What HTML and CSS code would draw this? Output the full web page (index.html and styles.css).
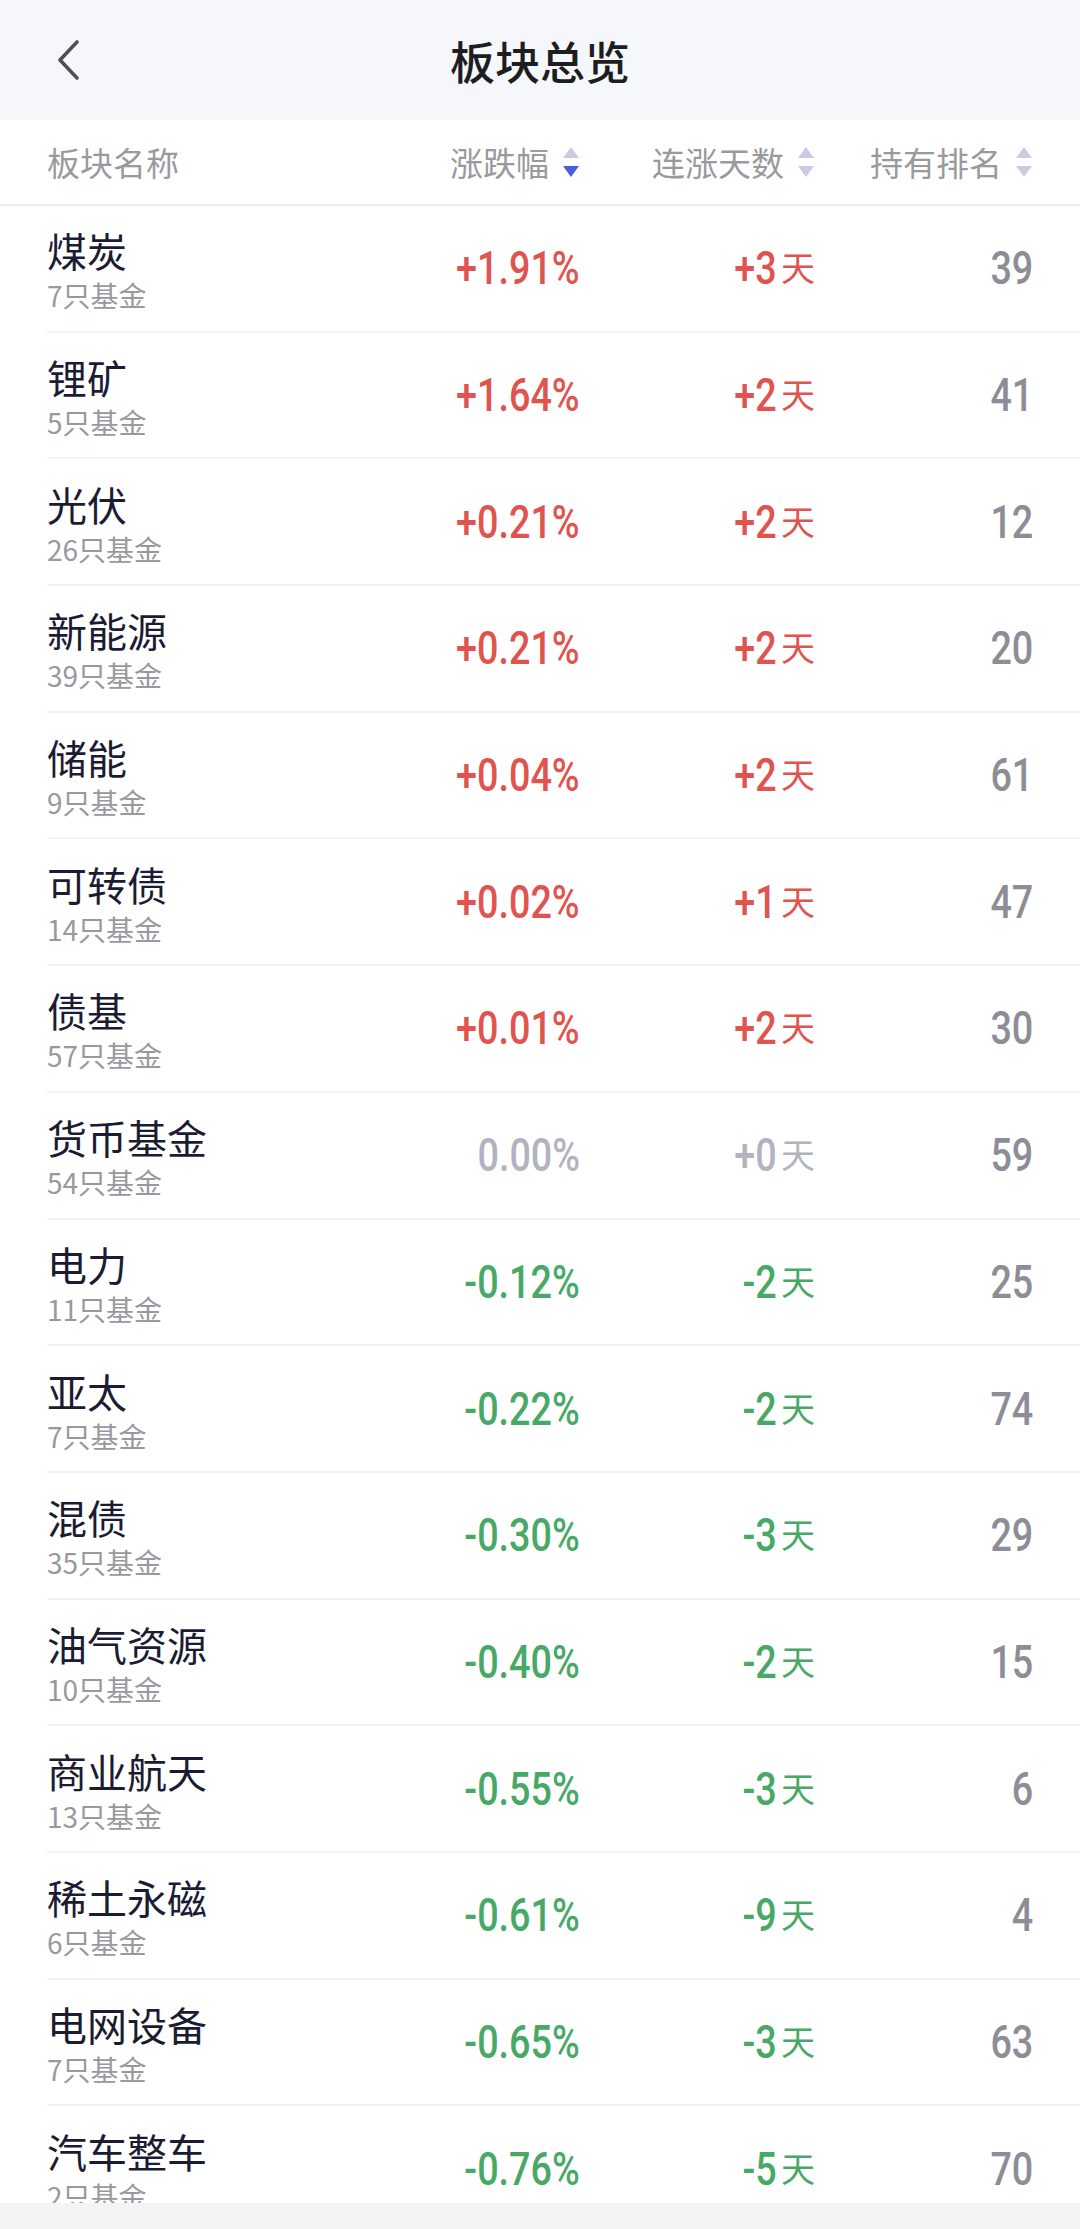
FILE: index.html
```html
<!DOCTYPE html>
<html>
    <head>
        <meta charset="utf-8">
        <title>板块总览</title>
        <link rel="stylesheet" href="styles.css">
    </head>
    <body>
        <header class="nav">
            <div class="nav-left">
                <svg class="back" width="26" height="42" viewBox="0 0 26 42">
                    <polyline points="21,3 4,21 21,39" fill="none" stroke="#4d4e58" stroke-width="3.6" stroke-linecap="round" stroke-linejoin="round"/>
                </svg>
            </div>
            <h1 class="title">板块总览</h1>
            <div></div>
        </header>

        <div class="thead">
            <div class="th th-name">板块名称</div>
            <div class="th">涨跌幅
                <svg class="sort" width="18" height="30" viewBox="0 0 18 30">
                    <polygon points="9,0 17,11 1,11" fill="#c9cbe3"/>
                    <polygon points="1,19 17,19 9,30" fill="#4660d9"/>
                </svg>
            </div>
            <div class="th">连涨天数
                <svg class="sort" width="18" height="30" viewBox="0 0 18 30">
                    <polygon points="9,0 17,11 1,11" fill="#c9cbe3"/>
                    <polygon points="1,19 17,19 9,30" fill="#c9cbe3"/>
                </svg>
            </div>
            <div class="th">持有排名
                <svg class="sort" width="18" height="30" viewBox="0 0 18 30">
                    <polygon points="9,0 17,11 1,11" fill="#c9cbe3"/>
                    <polygon points="1,19 17,19 9,30" fill="#c9cbe3"/>
                </svg>
            </div>
        </div>

        <main class="list">
            <div class="row up">
                <div class="name-cell"><div class="name">煤炭</div><div class="sub">7只基金</div></div>
                <div class="cell"><span class="num">+1.91%</span></div>
                <div class="cell"><span class="num">+3</span><span class="day">天</span></div>
                <div class="cell rank"><span class="num">39</span></div>
            </div>
            <div class="row up">
                <div class="name-cell"><div class="name">锂矿</div><div class="sub">5只基金</div></div>
                <div class="cell"><span class="num">+1.64%</span></div>
                <div class="cell"><span class="num">+2</span><span class="day">天</span></div>
                <div class="cell rank"><span class="num">41</span></div>
            </div>
            <div class="row up">
                <div class="name-cell"><div class="name">光伏</div><div class="sub">26只基金</div></div>
                <div class="cell"><span class="num">+0.21%</span></div>
                <div class="cell"><span class="num">+2</span><span class="day">天</span></div>
                <div class="cell rank"><span class="num">12</span></div>
            </div>
            <div class="row up">
                <div class="name-cell"><div class="name">新能源</div><div class="sub">39只基金</div></div>
                <div class="cell"><span class="num">+0.21%</span></div>
                <div class="cell"><span class="num">+2</span><span class="day">天</span></div>
                <div class="cell rank"><span class="num">20</span></div>
            </div>
            <div class="row up">
                <div class="name-cell"><div class="name">储能</div><div class="sub">9只基金</div></div>
                <div class="cell"><span class="num">+0.04%</span></div>
                <div class="cell"><span class="num">+2</span><span class="day">天</span></div>
                <div class="cell rank"><span class="num">61</span></div>
            </div>
            <div class="row up">
                <div class="name-cell"><div class="name">可转债</div><div class="sub">14只基金</div></div>
                <div class="cell"><span class="num">+0.02%</span></div>
                <div class="cell"><span class="num">+1</span><span class="day">天</span></div>
                <div class="cell rank"><span class="num">47</span></div>
            </div>
            <div class="row up">
                <div class="name-cell"><div class="name">债基</div><div class="sub">57只基金</div></div>
                <div class="cell"><span class="num">+0.01%</span></div>
                <div class="cell"><span class="num">+2</span><span class="day">天</span></div>
                <div class="cell rank"><span class="num">30</span></div>
            </div>
            <div class="row flat">
                <div class="name-cell"><div class="name">货币基金</div><div class="sub">54只基金</div></div>
                <div class="cell"><span class="num">0.00%</span></div>
                <div class="cell"><span class="num">+0</span><span class="day">天</span></div>
                <div class="cell rank"><span class="num">59</span></div>
            </div>
            <div class="row down">
                <div class="name-cell"><div class="name">电力</div><div class="sub">11只基金</div></div>
                <div class="cell"><span class="num">-0.12%</span></div>
                <div class="cell"><span class="num">-2</span><span class="day">天</span></div>
                <div class="cell rank"><span class="num">25</span></div>
            </div>
            <div class="row down">
                <div class="name-cell"><div class="name">亚太</div><div class="sub">7只基金</div></div>
                <div class="cell"><span class="num">-0.22%</span></div>
                <div class="cell"><span class="num">-2</span><span class="day">天</span></div>
                <div class="cell rank"><span class="num">74</span></div>
            </div>
            <div class="row down">
                <div class="name-cell"><div class="name">混债</div><div class="sub">35只基金</div></div>
                <div class="cell"><span class="num">-0.30%</span></div>
                <div class="cell"><span class="num">-3</span><span class="day">天</span></div>
                <div class="cell rank"><span class="num">29</span></div>
            </div>
            <div class="row down">
                <div class="name-cell"><div class="name">油气资源</div><div class="sub">10只基金</div></div>
                <div class="cell"><span class="num">-0.40%</span></div>
                <div class="cell"><span class="num">-2</span><span class="day">天</span></div>
                <div class="cell rank"><span class="num">15</span></div>
            </div>
            <div class="row down">
                <div class="name-cell"><div class="name">商业航天</div><div class="sub">13只基金</div></div>
                <div class="cell"><span class="num">-0.55%</span></div>
                <div class="cell"><span class="num">-3</span><span class="day">天</span></div>
                <div class="cell rank"><span class="num">6</span></div>
            </div>
            <div class="row down">
                <div class="name-cell"><div class="name">稀土永磁</div><div class="sub">6只基金</div></div>
                <div class="cell"><span class="num">-0.61%</span></div>
                <div class="cell"><span class="num">-9</span><span class="day">天</span></div>
                <div class="cell rank"><span class="num">4</span></div>
            </div>
            <div class="row down">
                <div class="name-cell"><div class="name">电网设备</div><div class="sub">7只基金</div></div>
                <div class="cell"><span class="num">-0.65%</span></div>
                <div class="cell"><span class="num">-3</span><span class="day">天</span></div>
                <div class="cell rank"><span class="num">63</span></div>
            </div>
            <div class="row down">
                <div class="name-cell"><div class="name">汽车整车</div><div class="sub">2只基金</div></div>
                <div class="cell"><span class="num">-0.76%</span></div>
                <div class="cell"><span class="num">-5</span><span class="day">天</span></div>
                <div class="cell rank"><span class="num">70</span></div>
            </div>
        </main>

        <footer class="bottom-bar"></footer>
    </body>
</html>
```

FILE: styles.css
```css
html, body {
    margin: 0;
    height: 100%;
}
body {
    font-family: "Noto Sans CJK SC", "Noto Sans", sans-serif;
    background: white;
    display: flex;
    flex-direction: column;
    overflow: hidden;
}
.nav {
    height: 120px;
    flex-shrink: 0;
    background: #f6f7fa;
    display: grid;
    grid-template-columns: 1fr auto 1fr;
    align-items: center;
}
.nav-left {
    padding-left: 56px;
    display: flex;
    align-items: center;
}
.back {
    display: block;
}
.title {
    margin: 0;
    font-size: 45px;
    font-weight: 500;
    color: #1d1d22;
    line-height: 1;
}
.thead {
    height: 86px;
    flex-shrink: 0;
    box-sizing: border-box;
    padding: 0 47px;
    border-bottom: 2px solid #efeff1;
    display: grid;
    grid-template-columns: 1fr 200px 235px 218px;
    align-items: center;
}
.th {
    font-size: 33px;
    color: #999a9e;
    display: flex;
    align-items: center;
    justify-content: flex-end;
    white-space: nowrap;
}
.th-name {
    justify-content: flex-start;
}
.sort {
    margin-left: 13px;
}
.list {
    flex: 1;
    overflow: hidden;
}
.row {
    height: 126.7px;
    box-sizing: border-box;
    margin-left: 47px;
    padding-right: 47px;
    border-bottom: 2px solid #f2f2f4;
    display: grid;
    grid-template-columns: 1fr 200px 235px 218px;
    align-items: center;
}
.name-cell {
    padding-top: 6px;
}
.name {
    font-size: 40px;
    line-height: 48px;
    color: #1b1c33;
}
.sub {
    font-size: 28px;
    line-height: 42px;
    color: #98999f;
}
.cell {
    text-align: right;
    white-space: nowrap;
    line-height: 1;
}
.num {
    display: inline-block;
    font-family: "Roboto", sans-serif;
    font-size: 46px;
    font-weight: 500;
    transform: scaleX(0.82);
    transform-origin: right center;
}
.day {
    font-size: 34px;
    margin-left: 4px;
    vertical-align: 3px;
}
.rank {
    color: #8c8d96;
}
.up .cell:not(.rank) {
    color: #e0544f;
}
.down .cell:not(.rank) {
    color: #48a866;
}
.flat .cell:not(.rank) {
    color: #b1b4c0;
}
.bottom-bar {
    height: 26px;
    flex-shrink: 0;
    background: #f4f4f4;
}
```
